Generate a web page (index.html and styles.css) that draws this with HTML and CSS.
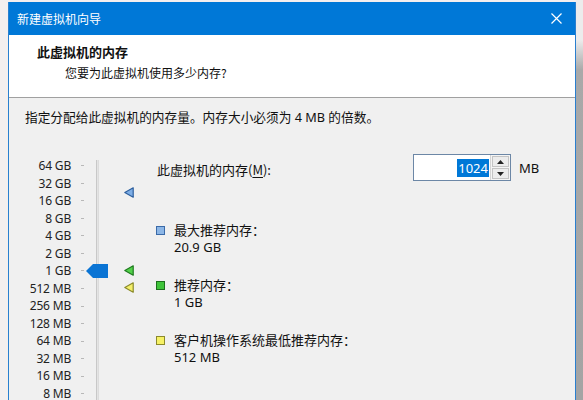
FILE: index.html
```html
<!DOCTYPE html>
<html lang="zh-CN">
<head>
<meta charset="utf-8">
<title>新建虚拟机向导</title>
<link rel="stylesheet" href="styles.css">
</head>
<body>
<div class="desk">
  <div class="window">
    <div class="titlebar">
      <span class="title">新建虚拟机向导</span>
      <svg class="close" width="11" height="11" viewBox="0 0 11 11"><path d="M0.5 0.5 L10.5 10.5 M10.5 0.5 L0.5 10.5" stroke="#fff" stroke-width="1.2" fill="none"/></svg>
    </div>
    <div class="header">
      <div class="h-title">此虚拟机的内存</div>
      <div class="h-sub">您要为此虚拟机使用多少内存?</div>
    </div>
    <div class="body">
      <p class="intro">指定分配给此虚拟机的内存量。内存大小必须为 4 MB 的倍数。</p>
      <div class="main">
        <div class="scale">
          <span class="lbl">64 GB</span><span class="tick"></span>
          <span class="lbl">32 GB</span><span class="tick"></span>
          <span class="lbl">16 GB</span><span class="tick"></span>
          <span class="lbl">8 GB</span><span class="tick"></span>
          <span class="lbl">4 GB</span><span class="tick"></span>
          <span class="lbl">2 GB</span><span class="tick"></span>
          <span class="lbl">1 GB</span><span class="tick"></span>
          <span class="lbl">512 MB</span><span class="tick"></span>
          <span class="lbl">256 MB</span><span class="tick"></span>
          <span class="lbl">128 MB</span><span class="tick"></span>
          <span class="lbl">64 MB</span><span class="tick"></span>
          <span class="lbl">32 MB</span><span class="tick"></span>
          <span class="lbl">16 MB</span><span class="tick"></span>
          <span class="lbl">8 MB</span><span class="tick"></span>
          <div class="track"></div>
          <svg class="thumb" width="22" height="14" viewBox="0 0 22 14"><polygon points="0,7 7,0 22,0 22,14 7,14" fill="#0a74d4"/></svg>
          <svg class="mark mark-max" width="10" height="11" viewBox="0 0 10 11"><polygon points="0.8,5.5 9.2,0.8 9.2,10.2" fill="#7eaee6" stroke="#2d5f9e" stroke-width="1.2" stroke-linejoin="round"/></svg>
          <svg class="mark mark-rec" width="10" height="11" viewBox="0 0 10 11"><polygon points="0.8,5.5 9.2,0.8 9.2,10.2" fill="#52d14a" stroke="#1f7a1f" stroke-width="1.2" stroke-linejoin="round"/></svg>
          <svg class="mark mark-min" width="10" height="11" viewBox="0 0 10 11"><polygon points="0.8,5.5 9.2,0.8 9.2,10.2" fill="#f4ef6a" stroke="#8a8a2a" stroke-width="1.2" stroke-linejoin="round"/></svg>
        </div>
        <div class="info">
          <div class="mem-row">
            <label class="mem-label">此虚拟机的内存(<u>M</u>):</label>
            <div class="spin">
              <div class="field"><span class="sel">1024</span></div>
              <div class="arrows">
                <span class="arr"><svg width="7" height="4" viewBox="0 0 7 4"><polygon points="0,4 3.5,0 7,4" fill="#222"/></svg></span>
                <span class="arr"><svg width="7" height="4" viewBox="0 0 7 4"><polygon points="0,0 3.5,4 7,0" fill="#222"/></svg></span>
              </div>
            </div>
            <span class="unit">MB</span>
          </div>
          <div class="legend first">
            <span class="sq sq-blue"></span>
            <div class="lg-text"><div>最大推荐内存：</div><div>20.9 GB</div></div>
          </div>
          <div class="legend">
            <span class="sq sq-green"></span>
            <div class="lg-text"><div>推荐内存：</div><div>1 GB</div></div>
          </div>
          <div class="legend">
            <span class="sq sq-yellow"></span>
            <div class="lg-text"><div>客户机操作系统最低推荐内存：</div><div>512 MB</div></div>
          </div>
        </div>
      </div>
    </div>
  </div>
</div>
</body>
</html>
```
FILE: styles.css
```css
* { box-sizing: border-box; }
html, body { margin: 0; padding: 0; }
body {
  width: 583px;
  height: 400px;
  overflow: hidden;
  font-family: "Noto Sans", "Noto Sans CJK SC", sans-serif;
  color: #111;
  background:
    linear-gradient(to bottom, #ececec 0, #ececec 40px, #a9a9a9 70px, #a4a4a4 100%) right top / 7px 100% no-repeat,
    #f4efef;
}
.desk {
  padding: 2px 0 0 8px;
  height: 400px;
}
.window {
  width: 568px;
  height: 398px;
  overflow: hidden;
  border-left: 1px solid #2a7fcf;
  border-right: 1px solid #2a7fcf;
  background: #f0f0f0;
  display: flex;
  flex-direction: column;
}
.window > * { flex-shrink: 0; }
.titlebar {
  height: 33px;
  background: #0078d7;
  display: flex;
  align-items: center;
  justify-content: space-between;
  padding: 0 13px 0 8px;
}
.title {
  color: #fff;
  font-family: "Noto Sans CJK SC", sans-serif;
  font-size: 12px;
  line-height: 16px;
}
.close { display: block; }
.header {
  height: 63px;
  background: #fff;
  border-bottom: 1px solid #a0a0a0;
  padding: 8px 0 0 28px;
}
.h-title {
  font-family: "Noto Sans CJK SC", sans-serif;
  font-weight: bold;
  font-size: 13px;
  line-height: 18px;
}
.h-sub {
  font-family: "Noto Sans CJK SC", sans-serif;
  font-size: 12px;
  line-height: 18px;
  margin: 3px 0 0 28px;
}
.body {
  padding: 10px 0 0 16px;
}
.intro {
  margin: 0;
  font-size: 12.7px;
  line-height: 18px;
  font-family: "Noto Sans", "Noto Sans CJK SC", sans-serif;
}
.main {
  margin-top: 28px;
  display: flex;
  align-items: flex-start;
}
.scale {
  margin-top: 3px;
  display: grid;
  grid-template-columns: 46px 22px 10px 53px;
  grid-auto-rows: 17.54px;
}
.lbl {
  grid-column: 1;
  text-align: right;
  font-size: 12px;
  line-height: 17.54px;
  color: #222;
  letter-spacing: -0.2px;
}
.tick {
  grid-column: 2;
  align-self: center;
  justify-self: center;
  width: 3px;
  height: 1px;
  background: #b8b8b8;
}
.track {
  grid-column: 3;
  grid-row: 1 / 15;
  margin: 3px 0 0 3px;
  width: 3px;
  border-left: 1px solid #c8c8c8;
  border-right: 1px solid #dcdcdc;
  background: #e4e4e4;
}
.thumb {
  grid-column: 3;
  grid-row: 7;
  align-self: center;
  margin-left: -7px;
}
.mark {
  grid-column: 4;
  align-self: center;
  margin-left: 21px;
}
.mark-max { grid-row: 3; margin-top: -16px; }
.mark-rec { grid-row: 7; }
.mark-min { grid-row: 8; margin-top: -1px; }
.info {
  width: 400px;
  display: flex;
  flex-direction: column;
}
.mem-row {
  display: flex;
  align-items: center;
  height: 27px;
}
.mem-label {
  font-family: "Noto Sans CJK SC", sans-serif;
  font-size: 13px;
  line-height: 18px;
  padding: 4px 0 0 1px;
  width: 257px;
}
.mem-label u { text-decoration-thickness: 1px; text-underline-offset: 2px; }
.spin {
  display: flex;
  height: 27px;
  border: 1px solid #6c87a6;
  background: #fff;
}
.field {
  width: 76px;
  display: flex;
  justify-content: flex-end;
  align-items: center;
  padding-right: 1px;
}
.sel {
  background: #0078d7;
  color: #fff;
  font-size: 13px;
  line-height: 18px;
  padding: 0 1px;
}
.arrows {
  width: 20px;
  display: flex;
  flex-direction: column;
  gap: 1px;
  padding: 1px;
  background: #f4f4f4;
  border-left: 1px solid #d4d4d4;
}
.arr {
  flex: 1;
  display: flex;
  align-items: center;
  justify-content: center;
  background: #ececec;
  border: 1px solid #c4c4c4;
}
.arr svg { display: block; }
.unit {
  margin-left: 8px;
  font-size: 13px;
  padding-top: 1px;
}
.legend {
  display: flex;
  align-items: flex-start;
  margin-top: 21px;
}
.legend.first { margin-top: 41px; }
.sq {
  width: 9px;
  height: 9px;
  margin-top: 4px;
  border: 1px solid;
}
.sq-blue { background: #8cb6e6; border-color: #3a6aa8; }
.sq-green { background: #3fc43a; border-color: #1d6f1d; }
.sq-yellow { background: #f6f165; border-color: #8c8a2c; }
.lg-text {
  margin-left: 9px;
  font-size: 13px;
  line-height: 17px;
  font-family: "Noto Sans", "Noto Sans CJK SC", sans-serif;
}
```
